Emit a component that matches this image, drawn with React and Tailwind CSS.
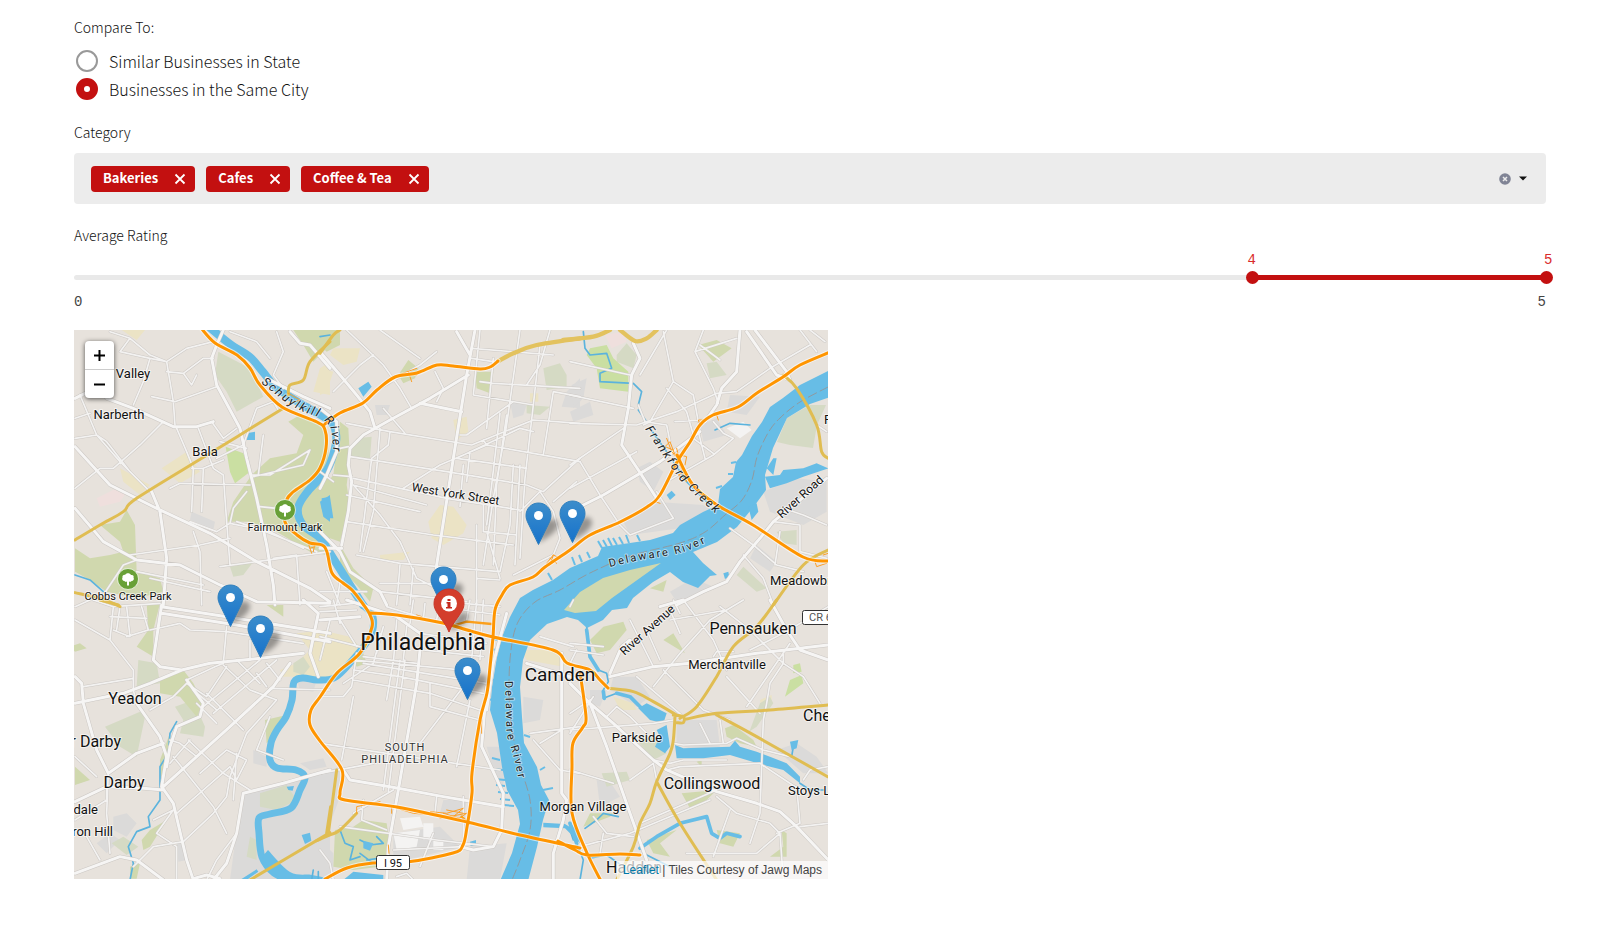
import { useState } from "react";

const numbers = (s) => s.trim().split(/[\s,ML]+/).filter(Boolean).map(Number);

// Turns "M x y L x y ..." polylines into smooth curves through the same points.
function smooth(d) {
  return d
    .split("M")
    .filter((s) => s.trim())
    .map((part) => {
      const n = numbers(part);
      const p = [];
      for (let i = 0; i + 1 < n.length; i += 2) p.push([n[i], n[i + 1]]);
      let out = `M${p[0][0]} ${p[0][1]}`;
      for (let i = 0; i < p.length - 1; i++) {
        const a = p[i - 1] || p[i];
        const b = p[i];
        const c = p[i + 1];
        const e = p[i + 2] || c;
        out += `C${b[0] + (c[0] - a[0]) / 6} ${b[1] + (c[1] - a[1]) / 6} ${c[0] - (e[0] - b[0]) / 6} ${c[1] - (e[1] - b[1]) / 6} ${c[0]} ${c[1]}`;
      }
      return out;
    })
    .join("");
}

// Each tile is drawn at three units per map unit from its own origin.
const TILES = [
  {
    at: [70, 325],
    park: "M670 15L780 15L780 60L730 110L700 60z M545 450L600 400L680 385L700 330L655 290L690 270L750 300L775 340L780 640L770 690L720 680L620 620L540 590L470 590L490 530z M90 600L150 590L170 555L195 600L200 740L270 760L280 800L200 820L110 800L60 765L15 740L15 670L60 700L120 690L160 680L150 650z",
    pale: "M445 80L540 130L580 215L500 260L470 200L435 150z M480 725L550 710L520 750L490 755z",
    meadow: "M467 365L520 385L540 440L495 475L480 440z",
    sand: "M275 430L350 380L365 400L390 440L330 475z M150 430L240 480L210 510L160 470z M750 130L780 110L780 210L730 200z M155 15L225 15L200 45z",
    pink: "M80 520L140 490L170 500L150 530L90 545z",
    grey: "M365 560L435 590L430 615L360 585z",
    pond: "M530 325L555 320L555 345L530 345z M750 530L780 510L780 590L760 575z",
    creek: "M15 750L60 765L100 800",
    major: "M15 365L120 480L270 555L420 625L560 710L720 790L780 830 M460 15L440 60L425 100L440 180L510 310L530 400L560 520L590 660L610 780L615 840 M245 500L270 560L290 700L280 840 M110 220L190 250L310 305L380 305L430 290 M15 550L100 650L200 705L330 720L450 780L560 830L780 835 M15 220L45 205 M660 20L690 55L720 60L780 130 M590 160L650 190L700 215L780 250",
    minor: "M30 210L80 330L150 410L240 500 M15 490L90 430L130 430L210 360L280 290 M190 240L220 170L240 100L150 80L180 40L120 20 M240 100L290 110L310 230L315 300 M180 40L240 90L290 110L350 70L430 50 M290 140L340 145L400 100L430 100 M340 145L365 180L380 150 M245 215L315 230L440 185 M320 310L350 380L370 430L365 560 M385 310L430 430L460 450L470 590 M425 290L460 340L500 310 M460 405L400 430L365 430 M300 490L330 475L540 480 M400 430L395 560 M440 400L520 360L560 250L610 230L625 255 M545 450L600 450L720 375L700 420L550 455 M620 20L640 80L610 150L640 190 M480 20L560 50L600 100 M180 690L390 660L480 640 M360 590L440 620L480 595L490 550L530 500 M480 595L600 620L700 670 M370 620L390 680L395 840 M470 590L480 720 M560 710L780 680 M610 700L680 690L690 840 M200 740L400 780 M240 760L420 800 M450 725L560 710 M580 330L565 450 M450 350L530 370 M100 810L160 720L200 705 M15 340L80 330L110 350L180 440 M570 545L620 550 M15 280L60 265 M500 590L560 610L740 680",
    yellow: "M15 645L90 600L160 560L200 520L420 385L640 250 M655 210L660 180L700 165L720 110L780 50 M15 803L90 820L150 845",
    ramp: "M715 655L725 685M735 655L730 680M720 670L735 665 M650 240L690 225L655 205",
  },
  {
    at: [320, 325],
    park: "M0 15L60 15L60 60L20 80L0 60z M235 150L265 105L295 130L285 160L250 175z M465 140L520 140L510 205L470 190z M60 290L85 310L90 400L80 480L90 540L60 650L30 640L0 560L0 500L40 450z M60 660L100 730L160 790L150 830L110 780L60 730z",
    pale: "M670 130L720 115L740 150L740 185L680 195z M620 240L690 245L660 270L620 265z M90 370L110 340L155 335L150 400L90 400z",
    sand: "M40 70L120 70L110 110L70 120L30 90z M0 130L40 140L20 200L0 210z M400 285L440 275L445 320L410 345z M325 590L360 540L400 545L440 600L430 625L370 660L335 640z M180 690L270 680L250 705L180 705z M630 205L655 205L655 230L630 230z",
    grey: "M570 230L620 240L610 270L580 280z M740 200L780 160L780 250L725 245z M165 240L210 240L200 270L170 270z",
    pond: "M115 190L145 170L155 185L130 215z M5 520L30 515L40 580L20 580L5 550z",
    creek: "M0 35L30 30",
    major: "M465 15L440 150L400 400L350 720L345 780 M445 150L330 220L210 285L130 330L90 370L85 420L95 470L85 560L65 660 M0 80L60 150L110 210L150 260L165 310 M410 20L450 90 M300 235L425 260 M0 620L60 680L90 740L180 800L200 840 M0 670L65 670 M0 250L50 290L50 380L20 450L0 490",
    minor: "M80 15L190 120L240 190L275 250 M180 15L300 100 M190 250L255 325 M80 295L210 320L455 360L640 285L780 295 M90 395L380 440L620 480L670 500L780 400 M100 460L380 520L600 555 M100 480L320 540 M80 510L300 560 M80 590L340 630L580 660 M110 690L240 715L540 740 M180 775L340 775 M210 320L205 360L155 400L120 680 M180 310L160 560L130 680 M100 480L180 570L240 650L290 760L350 790 M480 170L520 175L780 190 M455 70L700 90 M480 15L460 210L640 240 M520 100L500 310 M600 15L560 300L520 520L490 720 M660 60L640 240L615 460L600 700 M690 15L660 120L620 180 M540 265L515 480L500 600 M560 270L530 480L520 720 M580 230L440 330L420 330 M640 320L600 310L410 400 M500 360L360 420L250 490 M410 400L620 430 M580 420L570 600L540 740 M600 420L585 720 M450 380L440 470 M490 540L490 620L590 630 M600 560L660 500L700 560L720 640L700 690L580 750 M780 410L500 360L490 345 M670 390L700 200L780 215 M350 230L370 190L345 140 M40 200L120 120L160 90 M180 190L300 120L350 80 M770 470L700 530 M470 600L470 840 M500 620L540 760 M430 420L420 545 M60 370L85 365 M40 450L95 455 M0 440L40 470 M0 800L140 800 M20 740L60 840 M60 770L50 840 M240 720L230 840 M280 730L270 840 M180 800L440 830 M470 760L540 765 M455 100L520 110",
    yellow: "M0 85L40 30L60 15",
    bigYellow: "M535 108L580 85L650 60L780 40",
    ramp: "M235 150L290 130M265 140L275 170M240 150L290 150 M680 715L700 690L720 700M690 700L710 715M700 690L690 720",
  },
  {
    at: [570, 325],
    park: "M385 60L440 45L485 70L430 110z M240 790L290 765L280 800z",
    meadow: "M60 70L110 60L130 100L175 140L175 200L90 190L80 130L50 90z",
    pale: "M140 90L170 55L200 90L190 130L140 110z M410 115L440 110L470 150L420 160z M520 725L590 790L560 800L500 750z M620 620L680 615L680 660L640 655z",
    pink: "M105 30L160 20L170 50L125 70z",
    grey: "M480 210L570 215L530 270L470 260z M200 430L240 410L280 440L250 500L210 470z M160 590L250 530L400 540L440 560L330 610L180 630z M5 180L50 160L40 220L10 250z M0 260L60 230L70 270L10 290z M580 500L680 460L770 470L770 560L700 600L600 560z M390 300L440 280L470 330L400 350z M300 800L370 760L440 790L320 830z M560 660L620 710L600 740L540 700z",
    creek: "M40 20L45 70L60 90L110 85L125 130L90 145L90 170L190 175L215 200L205 240 M205 255L230 290 M240 310L290 380 M310 410L350 470L420 540 M435 315L480 295L540 300",
    pond: "M290 510L305 497L317 510L300 525z M585 455L630 450L640 435L700 430L740 415L775 430L700 455L650 475L600 490z M590 430L610 400L620 400L610 450z M460 745L475 740L478 755L465 762z M535 545L560 535L565 560L545 585z",
    white: "M470 310L520 290L545 315L510 340z",
    major: "M510 15L500 140L455 190L440 240L405 290 M190 55L210 100L185 150L175 250L155 360L205 435L260 520 M0 560L100 510L270 410L390 320 M320 840L400 800L470 770L510 710L570 640L610 590L770 460 M530 20L620 150L660 165L650 140L555 15",
    minor: "M0 110L180 150 M290 15L210 150 M280 20L310 170L240 290L220 300 M375 80L400 15 M375 80L430 190L445 235 M390 60L450 105 M0 210L190 250 M0 295L200 300L320 260L440 205L500 200L600 130L720 60 M205 240L225 290 M290 190L350 260L370 330 M310 170L370 210L385 290 M315 290L400 285 M370 340L430 385 M385 320L405 400 M430 290L460 325L490 340L430 390L290 470 M30 410L90 510L150 600L180 630L310 580L260 500 M0 420L160 310 M0 490L200 380 M690 15L740 80 M720 15L765 50 M640 550L700 570L770 600 M610 590L690 600L690 680L770 700 M480 610L550 660L620 720L700 740 M520 690L580 760L610 840 M630 620L615 720 M740 300L770 320 M375 80L500 40 M225 290L290 300L300 350",
    yellow: "M640 150L680 190L740 300L755 380L775 400 M775 675L700 720L610 840",
    bigYellow: "M-20 45L70 35L120 15 M150 15L195 48L230 40L260 15",
    ramp: "M290 340L305 380L330 410L315 390L300 350L285 365L310 375M320 370L335 430M345 420L350 395L310 385M390 300L385 285L405 285M440 270L445 285M255 530L270 535M320 410L345 440L325 450L350 470L330 420 M735 710L740 725L770 715 M760 690L775 685",
  },
  {
    at: [70, 600],
    park: "M230 10L270 10L250 90L250 170L200 140L235 90z M270 240L340 210L370 250L400 310L380 350L330 290L270 280z M585 360L650 345L620 400L590 430z M0 140L30 130L50 145L15 155z M15 500L60 540L15 555z M215 720L240 690L290 660L240 740L220 750z M590 15L640 15L640 50z M270 480L300 400L290 480L270 540z M180 800L210 790L200 836L180 836z",
    pale: "M205 180L260 190L270 250L200 260z M315 320L370 300L405 380L400 410L330 400L340 360z M105 380L210 335L225 350L200 470L150 440z M125 730L160 710L205 740L170 765z M670 190L700 170L720 200L700 225L670 215z",
    sand: "M680 100L780 90L780 240L740 230L640 230L630 210L680 190L720 150z",
    grey: "M130 650L170 640L200 670L170 710L130 690z M80 730L120 700L150 720L110 760z M515 580L780 505L780 840L480 840z M550 450L590 470L590 500L550 490z M690 490L760 475L770 500L720 510z M680 240L740 240L730 275L690 270z M320 730L345 730L350 780L325 785z",
    over: "M570 580L650 555L680 600L620 630L570 620z M540 710L560 720L560 780L530 770z",
    creek: "M320 365L300 400L295 460L270 500L270 600L235 650L240 680L200 695L175 740L190 790L180 840 M725 840L730 810 M745 840L745 815",
    pond: "M695 705L720 698L724 722L705 732z M510 840L560 808L565 815L530 840z M650 560L672 558L668 572L655 570z",
    major: "M275 15L265 80L250 180L270 200L335 210L420 190L570 175L700 160 M335 210L240 250L160 280L15 310 M275 20L500 55L780 100 M275 40L500 75L780 125 M660 190L610 260L480 380L280 560 M780 510L640 550L520 580L500 700L470 790L430 840 M15 230L35 250L40 310L80 450L115 520L200 460L280 430 M200 310L270 410L290 470L275 560L310 610L350 780L370 840 M15 605L110 560L220 565L280 570 M15 820L150 770L200 780L280 840 M700 0L745 40L720 160L745 230 M350 240L400 310L390 350L320 380L300 440L290 500 M370 836L410 825L450 836",
    minor: "M15 20L60 0 M70 0L130 20L270 10 M130 20L120 120L15 60 M120 120L190 210L190 270L200 310 M170 20L180 110L130 90 M215 20L235 90L170 110 M120 50L230 55 M40 260L190 235 M240 90L330 70L360 90L470 95L700 130 M470 80L460 190L435 200L350 240 M540 120L540 180 M460 195L540 270L620 300 M500 180L570 250 M400 320L570 180 M350 250L410 290L470 200 M410 280L520 390 M370 270L440 330 M430 340L620 180 M600 265L780 270 M620 300L530 400L480 530L470 590L430 640L340 725 M355 420L460 520L540 570 M310 470L430 620L470 700 M380 470L330 430 M390 520L470 450L530 480L500 540L480 500 M320 640L480 500 M300 490L360 420 M330 430L300 420 M340 725L250 740L190 800 M250 660L310 630L260 700L320 740L320 840 M410 840L440 780L500 700 M15 660L110 600L110 560 M15 470L80 530 M50 710L90 780 M115 520L110 640L120 760 M500 460L490 600 M600 350L560 450L640 480 M240 330L310 290L350 250 M440 370L380 310 M560 220L590 260 M590 190L630 240 M150 20L140 90",
    yellow: "M90 0L145 15 M540 840L780 698 M782 620L770 700",
  },
  {
    at: [320, 600],
    park: "M45 690L100 680L130 660L200 670L210 740L180 800L100 810L40 800z M100 180L130 160L140 190L110 200z",
    sand: "M0 90L90 110L130 150L60 230L0 240z M600 150L700 150L760 190L730 200L620 180z",
    grey: "M0 520L60 500L60 590L20 700L0 720z M500 440L550 440L560 520L540 580z M370 600L440 600L430 660L360 640z M610 290L670 300L660 360L610 370z M0 720L40 760L40 840L0 840z M450 740L560 730L540 840L440 840z M220 700L360 680L420 740L260 780L220 770z",
    white: "M240 655L300 650L310 680L250 690z M220 700L300 690L290 740L230 750z M310 670L340 670L340 720L310 720z M340 720L370 720L370 750L340 750z",
    creek: "M60 690L75 730L100 740L90 780L120 770 M120 720L150 735L190 730L170 710 M120 760L160 790 M140 780L175 775",
    pond: "M450 725L468 720L468 735L452 738z M70 840L100 815L190 825L190 840z M670 668L735 672L780 700L780 730L735 685L670 682z M130 722L160 730L150 752L130 745z",
    major: "M300 150L290 250L235 570L205 740L200 840 M70 510L90 540L210 560L370 590L550 620 M500 260L485 440L550 580L545 690L520 740L460 750L420 740 M80 0L230 50L300 100 M725 160L725 580L740 600L730 660L700 760L700 840 M620 190L780 240 M560 40L520 190L500 330 M0 60L120 50",
    minor: "M110 160L95 260L70 290L0 290 M130 190L500 250 M100 210L240 230L490 280 M100 240L330 280L480 330 M100 290L65 480 M190 80L160 190L70 250 M240 180L190 570 M255 180L205 575 M220 180L200 300 M430 260L300 430 M330 250L330 320L480 360 M450 300L410 500 M0 430L200 460L540 510 M0 520L160 490 M300 100L500 130 M310 150L490 170 M180 100L170 160 M360 0L350 60 M470 0L455 180 M490 0L480 180 M450 0L440 60 M430 30L540 45 M430 10L540 20 M60 60L110 140 M0 110L120 140 M30 60L0 180 M40 0L60 70 M130 600L125 660L200 690 M60 680L350 720L520 740 M220 570L100 640 M220 750L430 740 M0 750L30 790L40 840 M630 400L780 380 M640 420L720 510L780 520 M660 110L760 140 M350 590L345 640 M430 590L430 740 M340 700L300 800 M230 830L260 820L280 840 M230 60L220 190 M260 80L250 180 M0 20L100 10 M0 35L110 30 M130 170L290 190 M200 20L330 60 M280 0L270 70 M315 10L310 60 M725 390L660 430 M100 180L480 215",
    yellow: "M-10 722L30 705L60 690L110 640 M50 510L25 700",
    ramp: "M230 625L280 640L400 650L430 625L380 640L330 635L410 660L440 640L360 655M380 630L430 640M370 640L420 655 M215 620L215 640 M205 735L207 760 M110 640L110 620L180 605 M485 360L485 400 M290 45L305 50 M75 600L55 590",
    orangeThin: "M405 75L440 65L515 72 M405 78L450 90 M440 665L425 650",
  },
  {
    at: [570, 600],
    park: "M60 120L100 80L160 65L170 90L120 150L80 160z M280 120L310 100L345 160z M465 385L490 375L510 390L550 420L560 440L510 430L470 410z M335 580L440 570L410 600L360 625z M230 720L320 690L270 730L300 770L250 760z M440 690L510 700L490 740L450 730z M600 770L650 770L650 700L635 690L640 740z M40 680L120 650L130 640L60 640L35 690z M380 485L395 480L395 500z",
    meadow: "M645 290L660 240L695 225L700 250z M670 195L690 190L695 215L670 220z",
    pale: "M540 390L570 310L600 290L610 310L560 380L530 400z M200 420L260 410L290 460L250 480z M95 520L170 515L180 540L110 560z",
    sand: "M130 290L190 310L200 330L150 330z M570 300L605 285L605 310L575 330z",
    grey: "M320 360L440 360L450 440L370 450L320 430z M130 230L200 230L240 290L200 320L120 270z M620 450L680 430L740 470L775 520L700 520z M80 540L120 545L150 590L90 620z M60 270L110 270L90 320L60 310z",
    creek: "M50 80L60 170L85 210L110 220L115 245L100 270L100 295L140 280L180 290L210 320 M690 550L720 570L760 570 M665 470L670 440 M0 670L15 690L20 730L40 780L30 840 M220 760L300 800 M45 685L80 660L100 640L145 650 M60 775L110 765L160 800 M0 690L10 720",
    stream: "M50 90L60 170L85 210 M100 275L103 295 M140 280L180 290L215 325 M210 745L260 710L330 670L410 650L425 700L450 715L470 700L510 710 M0 670L20 730",
    pond: "M205 325L230 310L290 340L280 370L240 360z M260 390L290 375L300 440L285 460L255 440L270 410z M315 435L340 445L480 440L495 422L510 440L560 455L600 470L650 490L690 530L690 550L640 510L580 495L480 465L400 475L320 475z M660 425L685 420L680 445L665 450z",
    major: "M60 310L110 440L180 640L230 780 M120 230L250 200L360 190L560 160L773 135 M0 250L60 310L130 370L250 480L290 510L440 575L560 610L630 635L680 680L775 780 M120 220L155 140L180 120 M270 20L340 0 M600 0L650 90L690 150L775 180",
    minor: "M60 300L0 340 M0 390L250 370L310 360 M0 130L100 140 M0 150L100 165 M180 60L250 200 M230 90L270 180 M200 230L340 350 M280 210L400 330L480 360 M250 260L330 160L420 60L520 0 M450 20L540 90L640 190L700 230L750 310 M340 0L430 120L470 210 M470 230L570 340 M640 150L640 190L600 250L590 310L580 360L570 640 M660 130L530 320 M390 370L420 430 M450 360L460 430 M775 500L720 510L700 540 M290 510L330 500L570 490L690 570 M210 670L440 570 M250 490L260 540 M0 510L130 550 M30 740L180 700L420 600 M180 540L250 490 M440 590L500 640L600 670L630 700L640 840 M480 630L430 770 M570 640L540 730 M690 680L775 670 M630 700L560 760L350 760 M620 700L690 670L680 560 M70 650L110 700L190 710 M100 700L90 760 M775 20L640 100L540 150 M300 30L330 100 M0 20L10 0 M310 0L330 40 M430 170L440 155L490 155 M310 430L340 435L470 430L500 415L580 450L660 470 M250 480L300 490L340 480L470 480 M110 350L140 320L180 350L230 400 M40 330L70 290L0 400 M20 150L0 190 M300 60L470 30",
    yellow: "M620 0L560 80L490 140L440 230L380 320L330 355 M115 265L190 275L250 305L320 345 M773 315L600 330L440 340L350 357 M440 345L560 410L773 530 M315 350L310 420L300 460L260 545L240 610L210 670L190 740L140 840 M260 545L330 670L440 840 M310 345L340 350L340 368L320 368z",
  },
];

const origin = ([x, y]) => `translate(${x} ${y}) scale(.3333)`;

function Layer({ name, ...props }) {
  return TILES.filter((t) => t[name]).map((t) => (
    <path key={t.at.join()} d={t[name]} transform={origin(t.at)} {...props} />
  ));
}

const SCHUYLKILL_UPPER =
  "M208 326L230 344L250 357L263 372L277 388L303 405L330 421L336 434L335 448L327 470L308 491L298 508L303 525L320 538L333 558L350 585L363 605";
const SCHUYLKILL_LOWER =
  "M363 605L373 617L370 637L350 663L334 678L317 680L303 678L294 682L292 700L286 717L277 730L271 743L270 760L277 768L296 770L305 777L300 790L291 808L270 814L259 818L259 833L262 857L274 873L292 881";
const DELAWARE =
  "M830 370L800 385L783 398L770 407L762 422L752 436L742 455L736 462L733 477L720 489L718 505L703 512L680 525L673 533L650 540L630 543L602 547L598 556L570 568L553 580L533 590L520 598L510 617L502 637L497 657L492 687L490 710L497 733L502 767L507 790L518 810L520 824L512 853L500 881L528 881L537 847L543 820L549 800L541 785L537 767L524 743L522 717L520 687L523 660L530 640L547 624L567 617L578 620L587 628L603 620L612 610L627 608L633 598L653 582L670 572L683 582L698 588L710 576L717 575L703 563L693 552L717 542L737 527L755 505L766 490L765 475L773 448L787 418L810 404L830 397z";
const ISLAND = "M564 610L580 592L603 578L630 570L661 563L640 578L612 598L596 611L575 613z";
const PIERS =
  "M602 548L598 541M607 547L603 540M612 546L608 538M617 545L613 538M623 544L619 537M629 543L626 535M640 541L637 535M575 565L572 557M582 562L579 555M590 558L587 552M552 580L548 573M505 780L495 779M505 786L496 785M508 793L498 792M510 800L500 799M514 806L504 805M503 770L493 769M500 760L492 758M498 640L493 639M497 650L491 649M494 680L488 679M491 700L487 698M540 770L545 767M543 790L553 788M524 735L530 737M736 462L731 463M733 474L728 474M722 486L716 488";
const CHANNEL =
  "M828 387L800 402L780 418L768 433L757 457L752 480L742 500L725 515L705 532L680 543L630 556L590 573L560 590L535 602L518 622L511 650L509 690L512 730L520 765L530 800L530 830L520 860L512 880";

const ORANGE =
  "M201 328L215 343L237 355L250 368L260 385L282 407L317 422L325 430L326 448L320 468L310 480L293 492L286 502L285 522L297 535L310 543L322 545L327 552L332 573L343 583L352 590L363 604L370 615L372 627L360 653L337 673L320 697L311 710L310 725L320 741L342 770L340 793L345 800L397 807L467 822L520 835L580 848" +
  " M325 424L340 413L363 403L377 390L395 377L417 373L437 365L453 366L480 369L490 367L498 361" +
  " M830 352L800 365L783 377L757 393L738 407L713 415L700 425L690 442L677 462L660 495L647 507L620 522L590 535L570 550L545 567L533 577L510 585L502 595L495 610L493 637L490 667L487 693L480 720L472 773L472 793L467 827L463 845L453 853L407 862L373 863L347 868L325 879" +
  " M677 455L693 485L717 505L753 525L803 557L830 561" +
  " M370 613L397 615L443 623L467 630L493 637L553 650L567 663L590 670L600 680L608 688" +
  " M580 672L586 717L583 727L573 743L572 767L572 813L587 853L601 881 M558 841L575 850L587 855L620 854L640 855";

const LABELS = [
  ["Valley", 133, 378, 13],
  ["Narberth", 119, 419, 13],
  ["Bala", 205, 456, 13],
  ["Fairmount Park", 285, 531, 11],
  ["Cobbs Creek Park", 128, 600, 11],
  ["Yeadon", 135, 704, 16],
  ["Darby", 124, 788, 16],
  ["Philadelphia", 423, 650, 23],
  ["Camden", 560, 681, 19],
  ["Pennsauken", 753, 634, 16],
  ["Merchantville", 727, 669, 13],
  ["Parkside", 637, 742, 13],
  ["Collingswood", 712, 789, 16],
  ["Morgan Village", 583, 811, 13],
  ["Meadowbrook", 770, 585, 13, "start"],
  ["Cherry Hill", 803, 721, 16, "start"],
  ["Stoys Landing", 788, 795, 13, "start"],
  ["Pennsauken", 824, 424, 13, "start"],
  ["Upper Darby", 121, 747, 16, "end"],
  ["Glendale", 98, 814, 13, "end"],
  ["Sharon Hill", 113, 836, 13, "end"],
  ["Haddon", 606, 873, 16, "start"],
];

const MARKERS = [
  { x: 464, y: 214 },
  { x: 498, y: 212 },
  { x: 369, y: 278 },
  { x: 156, y: 296 },
  { x: 186, y: 327 },
  { x: 393, y: 369 },
];

function Park({ x, y }) {
  return (
    <g transform={`translate(${x} ${y})`}>
      <circle r="10.5" fill="#68a037" stroke="#fff" strokeOpacity=".7" />
      <path
        fill="#fff"
        d="M-1 6.500L-1 2.500C-2 3-3 3-3.500 2C-5.500 2-6.500 0-5.500-1.500C-6-3.500-4-4.500-3-4C-2-6.200 2-6.200 3-4C5-4.500 6.200-3 5.500-1.500C6.500 0 5.500 2 3.500 2C3 3 2 3 1 2.500L1 6.500z"
      />
    </g>
  );
}

function MapDrawing() {
  const line = { fill: "none", strokeLinecap: "round", strokeLinejoin: "round" };
  const halo = { paintOrder: "stroke", stroke: "#fff", strokeOpacity: 0.6, strokeWidth: 2, strokeLinejoin: "round" };
  return (
    <svg
      viewBox="74 330 754 549"
      preserveAspectRatio="xMidYMid slice"
      className="block h-full w-full font-[Roboto,sans-serif] font-normal"
      role="img"
      aria-label="Street map of Philadelphia"
    >
      <rect x="74" y="330" width="754" height="549" fill="#e7e2dc" />
      <Layer name="grey" fill="#dbdad9" />
      <Layer name="sand" fill="#ebe3c5" />
      <Layer name="pink" fill="#efdfdd" />
      <Layer name="pale" fill="#d5dac4" />
      <Layer name="park" fill="#d0d8ae" />
      <Layer name="meadow" fill="#cadfa2" />
      <Layer name="over" fill="#d5dac4" />
      <Layer name="white" fill="#f4f3f2" />
      <path d="M777 442L787 418L810 405L826 405L817 425L813 448L790 445z" fill="#d5dac4" />
      <g {...line}>
        <path d={smooth(SCHUYLKILL_UPPER)} stroke="#67bde6" strokeWidth="8" />
        <path d={smooth(SCHUYLKILL_LOWER)} stroke="#67bde6" strokeWidth="7" />
      </g>
      <path d={smooth("M262 857L274 873L292 881L335 881L330 879L312 875L290 872L268 850")} fill="#67bde6" />
      <Layer name="creek" {...line} stroke="#5bb3dd" strokeWidth="5" />
      <Layer name="stream" {...line} stroke="#67bde6" strokeWidth="11" />
      <path d={DELAWARE} fill="#67bde6" />
      <path d={PIERS} {...line} strokeLinecap="butt" stroke="#67bde6" strokeWidth="2" />
      <path d={ISLAND} fill="#d0d8ae" />
      <Layer name="pond" fill="#67bde6" />
      <Layer name="minor" {...line} stroke="#cdc9c5" strokeWidth="8" />
      <Layer name="major" {...line} stroke="#cbc7c3" strokeWidth="12" />
      <Layer name="minor" {...line} stroke="#f3f2f1" strokeWidth="5" />
      <Layer name="major" {...line} stroke="#f6f5f4" strokeWidth="9" />
      <path d={smooth(CHANNEL)} {...line} stroke="#8f9aa0" strokeDasharray="9 4" />
      {TILES.filter((t) => t.yellow).map((t) => (
        <path key={t.at.join()} d={smooth(t.yellow.replace(/z/g, ""))} transform={origin(t.at)} {...line} stroke="#e0bd52" strokeWidth="9" />
      ))}
      {TILES.filter((t) => t.bigYellow).map((t) => (
        <path key={t.at.join()} d={smooth(t.bigYellow)} transform={origin(t.at)} {...line} stroke="#e3c25e" strokeWidth="13" />
      ))}
      <Layer name="ramp" {...line} stroke="#fb9f27" strokeWidth="3" />
      <Layer name="orangeThin" {...line} stroke="#fb9f1b" strokeWidth="7" />
      <path d={smooth(ORANGE)} {...line} stroke="#fff" strokeOpacity=".6" strokeWidth="5" />
      <path d={smooth(ORANGE)} {...line} stroke="#ff9500" strokeWidth="3" />

      <Park x={285} y={510} />
      <Park x={128} y={579} />

      <g fill="#fff" stroke="#333">
        <rect x="376.500" y="855.500" width="33" height="14" rx="2" />
        <rect x="802.500" y="610.500" width="40" height="14" rx="2" />
      </g>
      <g fill="#111" className="text-[11px]">
        <text x="393" y="867" textAnchor="middle">I 95</text>
        <text x="809" y="621" fill="#555">CR 616</text>
      </g>

      <g fill="#111" {...halo}>
        {LABELS.map(([text, x, y, size, anchor = "middle"]) => (
          <text key={`${text}${x}`} x={x} y={y} fontSize={size} textAnchor={anchor}>
            {text}
          </text>
        ))}
        <text fontSize="12" textAnchor="middle" transform="translate(455 498) rotate(9)">West York Street</text>
        <text fontSize="12" textAnchor="middle" transform="translate(803 500) rotate(-42)">River Road</text>
        <text fontSize="12" textAnchor="middle" transform="translate(650 633) rotate(-42)">River Avenue</text>
        <g fill="#333" fontSize="11" textAnchor="middle" className="tracking-[1px]">
          <text x="405" y="751">SOUTH</text>
          <text x="405" y="763">PHILADELPHIA</text>
        </g>
      </g>
      <defs>
        <path id="schuylkill" d={smooth("M261 383L275 394L290 405L306 413L320 418L330 427L332 438L333 450L332 480")} />
        <path id="frankford" d="M645 429L664 457L680 480L700 500L722 519" />
        <path id="delaware-east" d={smooth("M610 567L640 560L680 553L712 540")} />
        <path id="delaware-south" d={smooth("M505 681L506 710L507 735L513 755L521 790")} />
      </defs>
      <g fill="#222" fontSize="12" className="tracking-[2px]" {...halo} strokeOpacity=".5">
        <text className="italic"><textPath href="#schuylkill">Schuylkill River</textPath></text>
        <text className="italic"><textPath href="#frankford">Frankford Creek</textPath></text>
        <text fontSize="11"><textPath href="#delaware-east">Delaware River</textPath></text>
        <text fontSize="11"><textPath href="#delaware-south">Delaware River</textPath></text>
      </g>
    </svg>
  );
}

function Pin() {
  return (
    <svg width="42" height="44" viewBox="0 0 42 44" className="block overflow-visible" aria-hidden="true">
      <defs>
        <linearGradient id="pin-blue" x1="0" y1="0" x2="0" y2="1">
          <stop offset="0" stopColor="#3c8dcb" />
          <stop offset="1" stopColor="#1672cb" />
        </linearGradient>
        <filter id="pin-shadow" x="-50%" y="-50%" width="200%" height="200%">
          <feGaussianBlur stdDeviation="2.500" />
        </filter>
      </defs>
      <path d="M13 41L19 23C23 15 33 16 33 23C32 30 22 36 13 41z" fill="#000" opacity=".35" filter="url(#pin-shadow)" />
      <path
        d="M13.500 1C6.500 1 1 6.500 1 13.500c0 3 1 5.500 2.500 8.500L13.500 42.500 23.500 22c1.500-3 2.500-5.500 2.500-8.500C26 6.500 20.500 1 13.500 1z"
        fill="url(#pin-blue)"
        stroke="#2f7fbd"
      />
      <circle cx="13.500" cy="13.500" r="4.500" fill="#fff" />
    </svg>
  );
}

function InfoPin() {
  return (
    <svg width="48" height="46" viewBox="0 0 48 46" className="block overflow-visible" aria-hidden="true">
      <path d="M16 43L24 28C30 22 37 24 35 30C33 36 25 40 16 43z" fill="#000" opacity=".35" filter="url(#pin-shadow)" />
      <path
        d="M16 1C7.500 1 1 7.500 1 15.500c0 5 2.500 8.500 6 13.500 3.500 5 7 9.500 9 15 2-5.500 5.500-10 9-15 3.500-5 6-8.500 6-13.500C31 7.500 24.500 1 16 1z"
        fill="#d33d2b"
        stroke="#c93527"
      />
      <circle cx="16" cy="15.500" r="8" fill="#fff" />
      <path d="M14.500 11h3v2h-3zM13.500 14h4v5h1.500v1.500h-6V19h1.500v-3.500h-1z" fill="#c5281c" />
    </svg>
  );
}

function Tag({ name, onRemove }) {
  return (
    <span className="flex h-[26px] items-center rounded bg-[#c31010] pr-[9px] pl-3 text-[13px] font-bold text-white">
      {name}
      <button type="button" aria-label={`Remove ${name}`} onClick={onRemove} className="ml-4">
        <svg width="12" height="12" viewBox="0 0 12 12" aria-hidden="true">
          <path d="M1.500 1.500l9 9M10.500 1.500l-9 9" stroke="#fff" strokeWidth="1.800" />
        </svg>
      </button>
    </span>
  );
}

const THUMB =
  "pointer-events-none absolute top-0 -left-[6px] h-[13px] w-[calc(100%+13px)] appearance-none bg-transparent [&::-webkit-slider-thumb]:pointer-events-auto [&::-webkit-slider-thumb]:size-[13px] [&::-webkit-slider-thumb]:appearance-none [&::-webkit-slider-thumb]:rounded-full [&::-webkit-slider-thumb]:bg-[#c31010]";

function RatingSlider() {
  const [low, setLow] = useState(4);
  const [high, setHigh] = useState(5);
  const percent = (v) => `${v * 20}%`;
  return (
    <fieldset className="mt-[21px]">
      <legend className="h-5 leading-5">Average Rating</legend>
      <div className="relative mt-1 h-[22px] font-['Liberation_Mono',monospace] text-sm leading-[22px] text-[#d92b2b]">
        <output className="absolute -translate-x-1/2" style={{ left: percent(low) }}>{low}</output>
        <output className="absolute -translate-x-1/4" style={{ left: percent(high) }}>{high}</output>
      </div>
      <div className="relative h-[13px]">
        <div className="absolute inset-x-0 top-1 h-[5px] rounded-full bg-[#e9e9e9]" />
        <div
          className="absolute top-1 h-[5px] bg-[#c31010]"
          style={{ left: percent(low), width: percent(high - low) }}
        />
        <input
          type="range" min="0" max="5" step="0.5" value={low} aria-label="Minimum average rating" className={THUMB}
          onChange={(e) => setLow(Math.min(Number(e.target.value), high))}
        />
        <input
          type="range" min="0" max="5" step="0.5" value={high} aria-label="Maximum average rating" className={THUMB}
          onChange={(e) => setHigh(Math.max(Number(e.target.value), low))}
        />
      </div>
      <div className="mt-2 flex h-5 justify-between font-['Liberation_Mono',monospace] text-sm leading-5 text-[#444]">
        <span>0</span>
        <span>5</span>
      </div>
    </fieldset>
  );
}

export default function App() {
  const [scope, setScope] = useState("city");
  const [tags, setTags] = useState(["Bakeries", "Cafes", "Coffee & Tea"]);
  const options = [
    ["state", "Similar Businesses in State"],
    ["city", "Businesses in the Same City"],
  ];
  return (
    <main className="min-h-screen bg-white pt-[17px] pr-[54px] pb-12 pl-[74px] font-['Noto_Sans_CJK_SC',sans-serif] text-sm font-light text-[#111]">
      <fieldset>
        <legend className="h-5 leading-5">Compare To:</legend>
        <div className="mt-[10px] pl-[2px]">
          {options.map(([value, text]) => (
            <label key={value} className="flex h-7 w-fit items-center gap-[11px] text-base">
              <input
                type="radio" name="scope" value={value} checked={scope === value} onChange={() => setScope(value)}
                className="size-[22px] appearance-none rounded-full border-2 border-[#999] bg-white checked:border-8 checked:border-[#c31010]"
              />
              {text}
            </label>
          ))}
        </div>
      </fieldset>

      <label htmlFor="category" className="mt-[19px] block h-5 leading-5">Category</label>
      <div className="mt-[11px] flex min-h-[51px] flex-wrap items-center gap-[11px] rounded bg-[#ececec] pr-[19px] pl-[17px]">
        {tags.map((name) => (
          <Tag key={name} name={name} onRemove={() => setTags(tags.filter((t) => t !== name))} />
        ))}
        <input id="category" role="combobox" aria-expanded="false" aria-controls="category" className="min-w-0 flex-1 bg-transparent outline-none" />
        <div className="flex items-center gap-2">
          <button type="button" aria-label="Clear all" onClick={() => setTags([])}>
            <svg width="12" height="12" viewBox="0 0 12 12" aria-hidden="true">
              <circle cx="6" cy="6" r="5.800" fill="#808495" />
              <path d="M4 4l4 4M8 4l-4 4" stroke="#ececec" strokeWidth="1.500" />
            </svg>
          </button>
          <button type="button" aria-label="Show categories">
            <svg width="8" height="5" viewBox="0 0 8 5" aria-hidden="true">
              <path d="M0 .5h8L4 4.500z" fill="#111" />
            </svg>
          </button>
        </div>
      </div>

      <RatingSlider />

      <section aria-label="Map" className="relative mt-[18px] h-[549px] w-full max-w-[754px] overflow-hidden">
        <MapDrawing />
        {MARKERS.map((m) => (
          <button
            key={`${m.x}-${m.y}`} type="button" aria-label="Nearby business"
            className="absolute -mt-[42px] -ml-[13px]" style={{ left: m.x, top: m.y }}
          >
            <Pin />
          </button>
        ))}
        <button type="button" aria-label="Selected business" className="absolute top-[258px] left-[359px]">
          <InfoPin />
        </button>
        <div className="absolute top-[11px] left-[11px] flex w-[29px] flex-col rounded bg-white text-black shadow-[0_1px_5px_rgba(0,0,0,0.65)]">
          <button type="button" aria-label="Zoom in" className="grid h-[29px] place-items-center border-b border-[#ccc]">
            <svg width="11" height="11" viewBox="0 0 11 11" aria-hidden="true">
              <path d="M5.500 0v11M0 5.500h11" stroke="currentColor" strokeWidth="2" />
            </svg>
          </button>
          <button type="button" aria-label="Zoom out" className="grid h-7 place-items-center">
            <svg width="11" height="11" viewBox="0 0 11 11" aria-hidden="true">
              <path d="M0 5.500h11" stroke="currentColor" strokeWidth="2" />
            </svg>
          </button>
        </div>
        <p className="absolute right-0 bottom-0 bg-white/70 px-[6px] font-['Liberation_Sans',sans-serif] text-[12px] leading-[18px] font-normal text-[#444]">
          <a href="https://leafletjs.com" className="text-[#0078a8]">Leaflet</a> | Tiles Courtesy of Jawg Maps
        </p>
      </section>
    </main>
  );
}
